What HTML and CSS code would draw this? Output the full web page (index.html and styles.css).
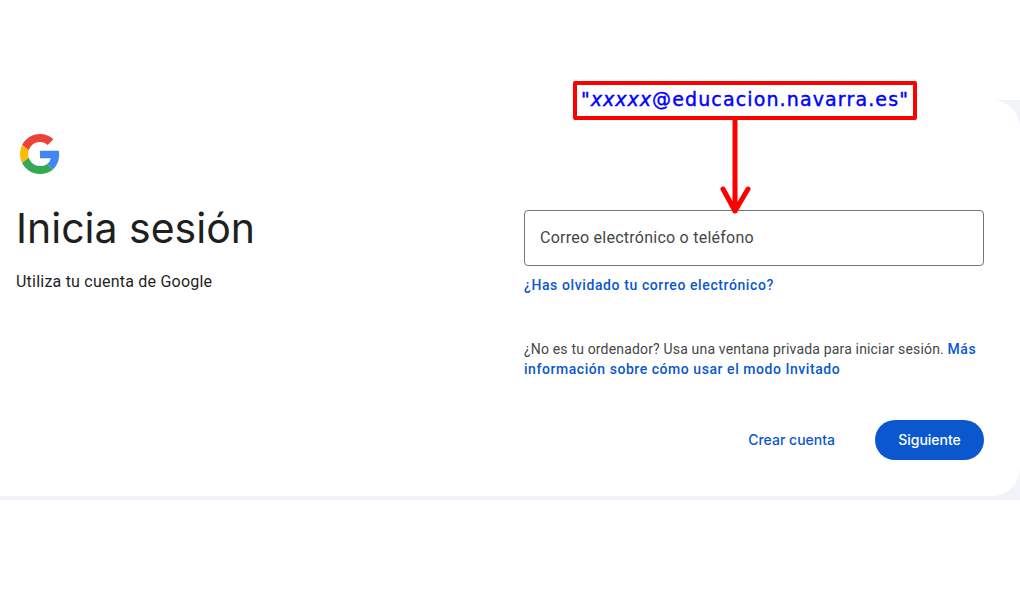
FILE: index.html
```html
<!DOCTYPE html>
<html lang="es">
<head>
    <meta charset="UTF-8">
    <meta name="viewport" content="width=device-width, initial-scale=1.0">
    <title>Inicia sesión - Cuentas de Google</title>
    <link rel="stylesheet" href="styles.css">
</head>
<body>
    <div class="shell">
        <main class="card">
            <section class="intro">
                <svg class="logo" viewBox="0 0 48 48" aria-label="Google">
                    <path fill="#EA4335" d="M24 9.5c3.54 0 6.71 1.22 9.21 3.6l6.85-6.85C35.9 2.38 30.47 0 24 0 14.62 0 6.51 5.38 2.56 13.22l7.98 6.19C12.43 13.72 17.74 9.5 24 9.5z"/>
                    <path fill="#4285F4" d="M46.98 24.55c0-1.57-.15-3.09-.38-4.55H24v9.02h12.94c-.58 2.96-2.26 5.48-4.78 7.18l7.73 6c4.51-4.18 7.09-10.36 7.09-17.65z"/>
                    <path fill="#FBBC05" d="M10.53 28.59c-.48-1.45-.76-2.99-.76-4.59s.27-3.14.76-4.59l-7.98-6.19C.92 16.46 0 20.12 0 24c0 3.88.92 7.54 2.56 10.78l7.97-6.19z"/>
                    <path fill="#34A853" d="M24 48c6.48 0 11.93-2.13 15.89-5.81l-7.73-6c-2.15 1.45-4.92 2.3-8.16 2.3-6.26 0-11.57-4.22-13.47-9.91l-7.98 6.19C6.51 42.62 14.62 48 24 48z"/>
                </svg>
                <h1 class="title">Inicia sesión</h1>
                <p class="subtitle">Utiliza tu cuenta de Google</p>
            </section>
            <section class="form">
                <input class="email" type="text" placeholder="Correo electrónico o teléfono">
                <a class="link forgot" href="#">¿Has olvidado tu correo electrónico?</a>
                <p class="guest">¿No es tu ordenador? Usa una ventana privada para iniciar sesión. <a class="link" href="#">Más información sobre cómo usar el modo Invitado</a></p>
                <div class="actions">
                    <button class="btn-text" type="button">Crear cuenta</button>
                    <button class="btn-next" type="button">Siguiente</button>
                </div>
            </section>
        </main>
    </div>

    <div class="callout">"<em>xxxxx</em>@educacion.navarra.es"</div>
    <svg class="arrow" viewBox="0 0 40 96">
        <path d="M20 0V91M8 69L20 91L33 69" fill="none" stroke="#ff0000" stroke-width="5" stroke-linecap="round" stroke-linejoin="round"/>
    </svg>
</body>
</html>
```

FILE: styles.css
```css
* {
    box-sizing: border-box;
}
body {
    margin: 0;
    height: 600px;
    overflow: hidden;
    background-color: #ffffff;
    font-family: Roboto, "Liberation Sans", sans-serif;
    color: #1f1f1f;
}
.shell {
    margin-top: 100px;
    height: 400px;
    background-color: #f0f4f9;
    overflow: hidden;
}
.card {
    margin-left: -24px;
    height: 396px;
    padding: 34px 36px 0 40px;
    background-color: #ffffff;
    border-radius: 28px;
    display: grid;
    grid-template-columns: 508px 460px;
}
.logo {
    display: block;
    width: 40px;
    height: 40px;
    margin-left: 4px;
}
.title {
    margin: 26px 0 0;
    font-family: Inter, Roboto, sans-serif;
    font-size: 41px;
    line-height: 56px;
    font-weight: 400;
}
.subtitle {
    margin: 14px 0 0;
    font-size: 16px;
    line-height: 24px;
    letter-spacing: 0.22px;
}
.form {
    padding-top: 76px;
}
.email {
    display: block;
    width: 100%;
    height: 56px;
    padding: 0 15px 2px;
    border: 1px solid #747775;
    border-radius: 4px;
    outline: none;
    font-family: inherit;
    font-size: 16px;
    letter-spacing: 0.25px;
}
.email::placeholder {
    color: #444746;
    opacity: 1;
}
.link {
    color: #0b57d0;
    font-weight: 500;
    text-decoration: none;
}
.forgot {
    display: block;
    margin-top: 9px;
    font-size: 14px;
    line-height: 20px;
    letter-spacing: 0.6px;
}
.guest {
    margin: 44px 0 0;
    font-size: 14px;
    line-height: 20px;
    letter-spacing: 0.17px;
    color: #444746;
}
.guest .link {
    letter-spacing: 0.55px;
}
.actions {
    display: flex;
    justify-content: flex-end;
    align-items: center;
    gap: 16px;
    margin-top: 41px;
}
.btn-text,
.btn-next {
    height: 40px;
    padding-bottom: 2px;
    border: none;
    border-radius: 20px;
    font-family: Inter, Roboto, sans-serif;
    font-size: 14px;
    font-weight: 500;
    cursor: pointer;
}
.btn-text {
    padding-left: 24px;
    padding-right: 24px;
    background-color: transparent;
    color: #0b57d0;
}
.btn-next {
    width: 109px;
    background-color: #0b57d0;
    color: #ffffff;
}

/* anotacion roja encima del formulario */
.callout {
    position: absolute;
    left: 573px;
    top: 81px;
    width: 344px;
    height: 39px;
    border: 4px solid #ff0000;
    border-radius: 2px;
    background-color: #ffffff;
    color: #0000ff;
    font-family: "DejaVu Sans", sans-serif;
    font-size: 19px;
    line-height: 29px;
    letter-spacing: 1.13px;
    text-align: center;
    white-space: nowrap;
    -webkit-text-stroke: 0.4px #0000ff;
}
.callout em {
    letter-spacing: 1px;
}
.arrow {
    position: absolute;
    left: 715px;
    top: 120px;
    width: 40px;
    height: 96px;
}
```
